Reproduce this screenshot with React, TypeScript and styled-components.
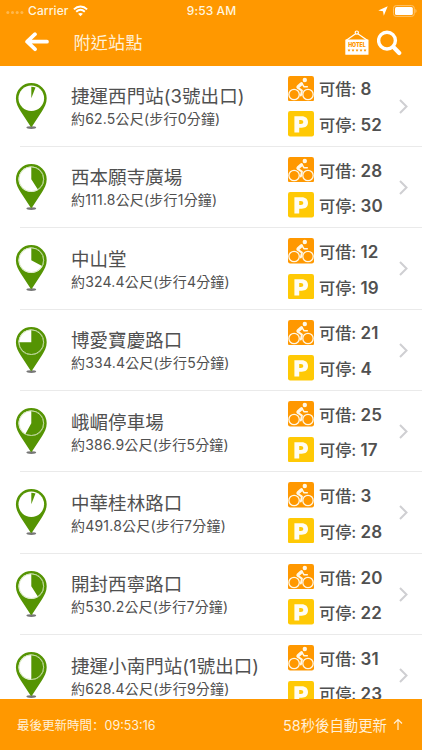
import React from "react";
import styled, { createGlobalStyle } from "styled-components";

const GlobalStyle = createGlobalStyle`
  * { box-sizing: border-box; }
  body { margin: 0; background: #fff; }
`;

const ORANGE = "#ff9800";
const GREEN = "#559403";

const Screen = styled.div`
  width: 422px;
  height: 750px;
  display: flex;
  flex-direction: column;
  overflow: hidden;
  background: #fff;
  color: #505050;
  font-family: Inter, "Noto Sans CJK TC", sans-serif;
  white-space: nowrap;
`;

const Header = styled.header`
  flex: none;
  height: 65.5px;
  background: ${ORANGE};
  color: #fff;
`;

const StatusBar = styled.div`
  height: 21px;
  display: grid;
  grid-template-columns: 1fr auto 1fr;
  align-items: center;
  padding: 0 5px 0 6px;
  font-size: 12px;
  font-weight: 500;
  letter-spacing: 0.1px;
  color: #fff5df;
`;

const StatusGroup = styled.div<{ $end?: boolean }>`
  display: flex;
  align-items: center;
  justify-content: ${(p) => (p.$end ? "flex-end" : "flex-start")};
  gap: ${(p) => (p.$end ? 5 : 6)}px;
`;

const Carrier = styled.span`
  margin-left: -2px;
  width: 39px;
`;

const NavBar = styled.nav`
  height: 44px;
  display: flex;
  align-items: center;
  padding: 0 20px 0 25px;
`;

const PageTitle = styled.h1`
  flex: 1;
  margin: 0 0 0 24.5px;
  font-size: 17px;
  font-weight: 400;
  letter-spacing: 0.3px;
  line-height: 24px;
  color: #fff0d8;
`;

const List = styled.main`
  flex: 1;
  min-height: 0;
  overflow: hidden;
`;

const Row = styled.section`
  height: 81.4px;
  display: flex;
  align-items: flex-start;
  padding-left: 15px;
`;

const PinBox = styled.div`
  width: 56px;
  flex: none;
  padding-top: 16px;
  svg { display: block; }
`;

const Info = styled.div`
  width: 217px;
  flex: none;
  padding-top: 18.6px;
`;

const StationName = styled.div`
  height: 25px;
  line-height: 25px;
  font-size: 18.5px;
  letter-spacing: 0.05px;
`;

const Distance = styled.div`
  height: 20px;
  line-height: 20px;
  font-size: 14px;
  letter-spacing: 0.2px;
`;

const Counts = styled.div`
  width: 110px;
  flex: none;
  display: flex;
  flex-direction: column;
  gap: 10px;
  padding-top: 10px;
`;

const Count = styled.div`
  height: 25.5px;
  display: flex;
  align-items: center;
  gap: 5px;
  font-size: 17px;
  font-weight: 600;
  svg { display: block; flex: none; }
`;

const CountLabel = styled.span`
  font-weight: 500;
  font-size: 16.2px;
`;

const Chevron = styled.div`
  height: 81px;
  display: flex;
  align-items: center;
`;

const Divider = styled.div`
  height: 1px;
  margin: -1px 0 0 20px;
  background: #eaeaea;
`;

const Footer = styled.footer`
  flex: none;
  height: 51.5px;
  display: flex;
  align-items: center;
  justify-content: space-between;
  padding: 0 19px 0 17px;
  background: ${ORANGE};
  color: #fff0d8;
`;

const Updated = styled.span`
  font-size: 12.5px;
`;

const Colon = styled.span`
  font-family: "Noto Sans CJK SC", sans-serif;
`;

const Clock = styled.span`
  font-size: 12.5px;
`;

const Refresh = styled.span`
  display: flex;
  align-items: center;
  gap: 6px;
  font-size: 14.4px;
`;

const sector = (percent: number, r: number) => {
  const a = (percent / 100) * Math.PI * 2;
  const x = 16.3 + r * Math.sin(a);
  const y = 16.2 - r * Math.cos(a);
  return `M16.3 16.2V${16.2 - r}A${r} ${r} 0 ${percent > 50 ? 1 : 0} 1 ${x} ${y}Z`;
};

const Pin = ({ percent }: { percent: number }) => (
  <PinBox>
    <svg width="33" height="49" viewBox="0 0 33 49">
      <ellipse cx="16.3" cy="45.6" rx="4.9" ry="1.3" fill="#777" />
      <path d="M16.3 1A15.4 15.2 0 0 0 .9 16.2C.9 21.4 3.2 25.2 5.6 29.2L15.6 44.6Q16.3 45.5 17 44.6L27 29.2C29.4 25.2 31.7 21.4 31.7 16.2A15.4 15.2 0 0 0 16.3 1Z" fill={GREEN} />
      <circle cx="16.3" cy="16.2" r="12.8" fill="#fff" />
      <path d={sector(percent, percent < 10 ? 11.4 : 12.8)} fill={GREEN} />
      {percent > 10 && <circle cx="16.3" cy="16.2" r="12.3" fill="none" stroke="#d4e5bc" strokeWidth=".9" />}
    </svg>
  </PinBox>
);

const BikeIcon = () => (
  <svg width="26" height="25.5" viewBox="0 0 26 25.5">
    <rect width="26" height="25.5" rx="2.2" fill={ORANGE} />
    <g fill="none" stroke="#fff8e8" strokeLinecap="round" strokeLinejoin="round">
      <circle cx="6.1" cy="18.5" r="5.2" strokeWidth="1.3" />
      <circle cx="20" cy="18.5" r="5.2" strokeWidth="1.3" />
      <path d="M13.5 7.8L10.1 10.8" strokeWidth="3.3" />
      <path d="M9.6 11.6L13.9 14.6L12.9 19.4" strokeWidth="2" />
      <path d="M14.2 7.8L16.1 10.8H19.3" strokeWidth="1.5" />
    </g>
    <circle cx="16.8" cy="4" r="2.2" fill="#fff8e8" />
  </svg>
);

const ParkingIcon = () => (
  <svg width="26" height="25.5" viewBox="0 0 26 25.5">
    <rect width="26" height="25.5" rx="2.2" fill="#ffc905" />
    <path fillRule="evenodd" fill="#fffdf3" d="M6.4 5.2H13.6C17.8 5.2 20 7.4 20 11C20 14.8 17.7 16.7 13.7 16.7H11.2V21.4H6.4ZM11.2 9V13H12.9C14.5 13 15.3 12.3 15.3 11C15.3 9.7 14.5 9 12.9 9Z" />
  </svg>
);

const stations = [
  { name: "捷運西門站(3號出口)", distance: "約62.5公尺(步行0分鐘)", bikes: 8, docks: 52, percent: 6 },
  { name: "西本願寺廣場", distance: "約111.8公尺(步行1分鐘)", bikes: 28, docks: 30, percent: 41 },
  { name: "中山堂", distance: "約324.4公尺(步行4分鐘)", bikes: 12, docks: 19, percent: 33 },
  { name: "博愛寶慶路口", distance: "約334.4公尺(步行5分鐘)", bikes: 21, docks: 4, percent: 75 },
  { name: "峨嵋停車場", distance: "約386.9公尺(步行5分鐘)", bikes: 25, docks: 17, percent: 58 },
  { name: "中華桂林路口", distance: "約491.8公尺(步行7分鐘)", bikes: 3, docks: 28, percent: 6 },
  { name: "開封西寧路口", distance: "約530.2公尺(步行7分鐘)", bikes: 20, docks: 22, percent: 41 },
  { name: "捷運小南門站(1號出口)", distance: "約628.4公尺(步行9分鐘)", bikes: 31, docks: 23, percent: 50 },
];

const HotelText = styled.text`
  font: 900 5.6px Inter, sans-serif;
  fill: ${ORANGE};
`;

const Actions = styled.div`
  display: flex;
  align-items: center;
  gap: 8px;
`;

export default function App() {
  return (
    <Screen>
      <GlobalStyle />
      <Header>
        <StatusBar>
          <StatusGroup>
            <svg width="18" height="8" viewBox="0 0 18 8" fill="#ffb84d">
              <circle cx="1.8" cy="5.5" r="1.5" /><circle cx="6.5" cy="5.5" r="1.5" />
              <circle cx="11.2" cy="5.5" r="1.5" /><circle cx="15.9" cy="5.5" r="1.5" />
            </svg>
            <Carrier>Carrier</Carrier>
            <svg width="15" height="12" viewBox="0 0 15 12" fill="none" stroke="#fff" strokeWidth="1.9">
              <path d="M.9 4.4C4.7.5 10.3.5 14.1 4.4M3.2 6.8C5.8 4.3 9.2 4.3 11.8 6.8" />
              <path d="M7.5 11.2L5.1 8.8C6.4 7.6 8.6 7.6 9.9 8.8Z" fill="#fff" stroke="none" />
            </svg>
          </StatusGroup>
          <span>9:53 AM</span>
          <StatusGroup $end>
            <svg width="10" height="10" viewBox="0 0 10 10"><path d="M9.7.2L5.8 9.7L5 5.3L.3 4.5Z" fill="#fff" /></svg>
            <svg width="24" height="12" viewBox="0 0 24 12">
              <rect x=".5" y=".6" width="20.8" height="10.8" rx="2.7" fill="none" stroke="#ffc46a" />
              <rect x="2" y="2.1" width="17.8" height="7.8" rx="1.5" fill="#fff" />
              <path d="M22.4 4C23.9 4.6 23.9 7.4 22.4 8Z" fill="#ffc46a" />
            </svg>
          </StatusGroup>
        </StatusBar>
        <NavBar>
          <svg width="24" height="22" viewBox="0 0 24 22" fill="none" stroke="#fff" strokeWidth="3.7" strokeLinecap="round" strokeLinejoin="round">
            <path d="M10 2.2L2.1 9.7L10 17.2M2.5 9.7H22" />
          </svg>
          <PageTitle>附近站點</PageTitle>
          <Actions>
            <svg width="24" height="26" viewBox="0 0 24 26">
              <path d="M1.3 10.3L11.7 3L22.3 10.3" fill="none" stroke="#fff" strokeWidth="1.2" />
              <circle cx="11.8" cy="2.6" r="1.6" fill={ORANGE} stroke="#fff" strokeWidth="1.2" />
              <rect x=".3" y="9.6" width="23.2" height="15.2" rx=".5" fill="#fff" />
              <HotelText x="11.9" y="16.9" textAnchor="middle" textLength="17.5" lengthAdjust="spacingAndGlyphs">HOTEL</HotelText>
              {[4, 8, 12, 16, 20].map((x) => (
                <path key={x} d={`M${x} 18.7L${x + 0.5} 19.8H${x + 1.5}L${x + 0.7} 20.5L${x + 1} 21.5L${x} 20.9L${x - 1} 21.5L${x - 0.7} 20.5L${x - 1.5} 19.8H${x - 0.5}Z`} fill={ORANGE} />
              ))}
            </svg>
            <svg width="25" height="26" viewBox="0 0 25 26" fill="none" stroke="#fff">
              <circle cx="10" cy="10.6" r="8.4" strokeWidth="3.4" />
              <path d="M16.4 17L22.2 23" strokeWidth="4.2" strokeLinecap="round" />
            </svg>
          </Actions>
        </NavBar>
      </Header>
      <List>
        {stations.map((s) => (
          <React.Fragment key={s.name}>
            <Row>
              <Pin percent={s.percent} />
              <Info>
                <StationName>{s.name}</StationName>
                <Distance>{s.distance}</Distance>
              </Info>
              <Counts>
                <Count><BikeIcon /><span><CountLabel>可借:</CountLabel> {s.bikes}</span></Count>
                <Count><ParkingIcon /><span><CountLabel>可停:</CountLabel> {s.docks}</span></Count>
              </Counts>
              <Chevron>
                <svg width="11" height="17" viewBox="0 0 11 17" fill="none" stroke="#cfcfd2" strokeWidth="2">
                  <path d="M2 2L8.5 8.5L2 15" />
                </svg>
              </Chevron>
            </Row>
            <Divider />
          </React.Fragment>
        ))}
      </List>
      <Footer>
        <Updated>最後更新時間<Colon lang="zh-Hans">：</Colon><Clock>09:53:16</Clock></Updated>
        <Refresh>
          58秒後自動更新
          <svg width="10" height="13" viewBox="0 0 10 13" fill="none" stroke="#fff0d8" strokeWidth="1.2">
            <path d="M5 12V1.5M1 5.5L5 1.5L9 5.5" />
          </svg>
        </Refresh>
      </Footer>
    </Screen>
  );
}
